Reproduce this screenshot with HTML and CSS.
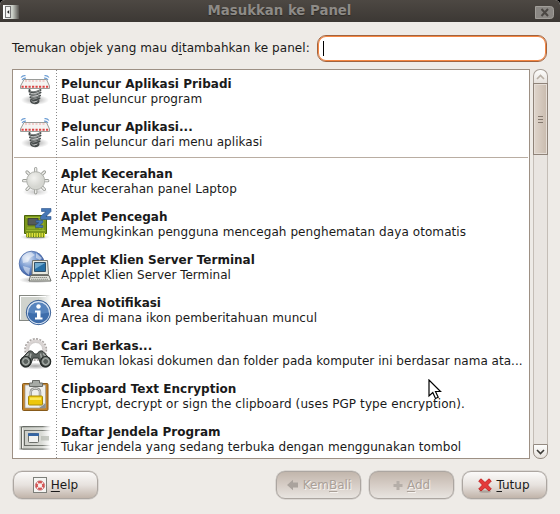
FILE: index.html
```html
<!DOCTYPE html>
<html lang="id">
<head>
<meta charset="utf-8">
<title>Masukkan ke Panel</title>
<link rel="stylesheet" href="styles.css">
</head>
<body>
<div class="window">
  <header class="titlebar">
    <svg class="app-icon" width="16" height="16" viewBox="0 0 16 16">
      <defs><linearGradient id="ai" x1="0" x2="1"><stop offset="0" stop-color="#fff"/><stop offset=".6" stop-color="#c8ccc4"/><stop offset="1" stop-color="#55524e"/></linearGradient></defs>
      <rect x="0" y="1" width="16" height="14" fill="url(#ai)"/>
      <rect x="2.500" y="2.500" width="5" height="11" fill="#f4f4f2" stroke="#777"/>
      <path d="M6.200 6v4L4 8z" fill="#222"/>
    </svg>
    <h1>Masukkan ke Panel</h1>
    <span class="close"><svg width="19" height="13" viewBox="0 0 19 13"><path d="M.5 .5H15.500Q18.500 .5 18.500 3.500V9.500Q18.500 12.500 15.500 12.500H.5Z" fill="#8a8783" stroke="#a19e99"/><path d="M6.500 3l6.500 7M13 3l-6.500 7" stroke="#4b4743" stroke-width="2"/></svg></span>
  </header>
  <div class="search">
    <label>Temukan objek yang mau d<u>i</u>tambahkan ke panel:</label>
    <div class="entry"><i class="caret"></i></div>
  </div>
  <div class="body">
    <div class="list">
      <div class="row"><svg class="icon" viewBox="0 0 36 34">
        <defs>
          <radialGradient id="sh"><stop offset="0" stop-color="#000" stop-opacity=".35"/><stop offset="1" stop-color="#000" stop-opacity="0"/></radialGradient>
          <g id="spring">
            <ellipse cx="17" cy="26" rx="14" ry="5" fill="url(#sh)"/>
            <path d="M3 3.500Q5 1 7.500 1.700M4 6Q5.500 3.700 8 4.200M31 3.500Q29 1 26.500 1.700M30 6Q28.500 3.700 26 4.200" fill="none" stroke="#6f9fd4" stroke-width="1.200"/>
            <path d="M11.500 16V17.500Q17 19.500 22.500 16M12 20.300Q17 22 22.500 18.500M12.500 23.300Q17 25 22 21.500M13 26Q17 27.500 21.500 24.200M13 26Q12.500 29 17 29.200Q20.500 29 20.500 27" fill="none" stroke="#454a4a" stroke-width="2" stroke-linecap="round"/>
            <path d="M12 17.300Q17 19 22 16.300M12.500 20.200Q17 21.800 22 18.800M13 23.200Q17 24.700 21.500 21.800M13.500 26.200Q14 28.700 17 28.800" fill="none" stroke="#a3a8a6" stroke-width=".7"/>
            <path d="M6 5.500H28.500L31.500 12V14.500H2.500V12Z" fill="#f5f4f2" stroke="#8f918d" stroke-width=".9"/>
            <path d="M7 7H27.500" stroke="#eda6a3" stroke-width="1" stroke-dasharray="2 1.500"/>
            <path d="M3.500 12.700H31" stroke="#dc4545" stroke-width="2" stroke-dasharray="2.200 1.300"/>
          </g>
        </defs>
        <use href="#spring"/></svg>
        <div class="text"><b class="ls4">Peluncur Aplikasi Pribadi</b><span class="ls9">Buat peluncur program</span></div></div>
      <div class="row"><svg class="icon" viewBox="0 0 36 34"><use href="#spring"/></svg>
        <div class="text"><b class="ls4">Peluncur Aplikasi...</b><span class="ls4">Salin peluncur dari menu aplikasi</span></div></div>
      <div class="sep"></div>
      <div class="row"><svg class="icon" viewBox="0 0 36 34">
        <defs><radialGradient id="sun" cx=".4" cy=".35"><stop offset="0" stop-color="#f2f2ef"/><stop offset="1" stop-color="#d5d6d1"/></radialGradient></defs>
        <ellipse cx="17.700" cy="28" rx="13" ry="4" fill="url(#sh)" opacity=".6"/>
        <g stroke="#9a9c97" stroke-width="3.200" stroke-linecap="round"><path d="M17.700 4.600V28.800M5.600 16.700H29.800M9 8L26.400 25.400M26.400 8L9 25.400"/></g>
        <path d="M17.700 4.600V28.800M5.600 16.700H29.800M9 8L26.400 25.400M26.400 8L9 25.400" stroke="#eeeeeb" stroke-width="1.500" stroke-linecap="round"/>
        <circle cx="17.700" cy="16.700" r="9" fill="url(#sun)" stroke="#b0b2ad"/></svg>
        <div class="text"><b>Aplet Kecerahan</b><span class="ls7">Atur kecerahan panel Laptop</span></div></div>
      <div class="row"><svg class="icon" viewBox="0 0 36 34">
        <ellipse cx="17" cy="30" rx="15" ry="3" fill="url(#sh)"/>
        <path d="M6.500 8.500H28.500V26.500H26.500V30H8.500V26.500H6.500Z" fill="#7b961b" stroke="#4a640b"/>
        <path d="M8 10.500H27M8 23.500H27M9 21H17M22 22V12M25 24V12" stroke="#a7c43a" stroke-width=".8"/>
        <path d="M8.500 28H27" stroke="#dde03b" stroke-width="4" stroke-dasharray="1.500 1"/>
        <path d="M10 11.500H20V18H10Z" fill="#555b5a" stroke="#363b38" stroke-width=".8"/>
        <path d="M23.500 1.500H33V4.500L28 9.500H33V12.500H22.500V9.500L28 4.500H23.500ZM18 13.500H25V15.500L21.500 18.500H25V20.500H17.500V18.500L21 15.500H18Z" fill="#4677b5" stroke="#2c5289" stroke-width=".6"/></svg>
        <div class="text"><b class="ls4">Aplet Pencegah</b><span class="ls8">Memungkinkan pengguna mencegah penghematan daya otomatis</span></div></div>
      <div class="row"><svg class="icon" viewBox="0 0 36 34">
        <defs><radialGradient id="gl" cx=".35" cy=".3" r=".8"><stop offset="0" stop-color="#dce6f5"/><stop offset=".5" stop-color="#6c90cb"/><stop offset="1" stop-color="#27468e"/></radialGradient></defs>
        <ellipse cx="18" cy="30" rx="17" ry="3.500" fill="url(#sh)"/>
        <circle cx="13.700" cy="13.700" r="12.500" fill="url(#gl)" stroke="#4060a0" stroke-width=".7"/>
        <path d="M4 7Q8 2 13 2L17 5L12 8L10 12L5 13ZM5 16L12 18L11 25Q6 22 5 16ZM18 3L24 8L22 10L18 8Z" fill="#fff" opacity=".5"/>
        <path d="M14.500 10.500H29.500L30.500 24.500H14Z" fill="#e7e8df" stroke="#74766f"/>
        <path d="M16.500 12.500H27.500V21.500H16.500Z" fill="#276fa5" stroke="#315169"/><path d="M17 13H27L17 19Z" fill="#72acd0"/>
        <path d="M12.500 25.500H31L33 31H11Z" fill="#e2e3dc" stroke="#686a65"/>
        <path d="M13.500 27.500H29M13 29.300H30" stroke="#8e918a" stroke-dasharray="1.500 .5"/></svg>
        <div class="text"><b>Applet Klien Server Terminal</b><span>Applet Klien Server Terminal</span></div></div>
      <div class="row"><svg class="icon" viewBox="0 0 36 34">
        <defs><linearGradient id="fd" x1="0" x2="1"><stop offset="0" stop-color="#d0d3cd"/><stop offset=".6" stop-color="#d0d3cd"/><stop offset="1" stop-color="#d0d3cd" stop-opacity="0"/></linearGradient>
        <linearGradient id="fe" gradientUnits="userSpaceOnUse" x1="1" x2="33" y1="0" y2="0"><stop offset="0" stop-color="#858882"/><stop offset=".5" stop-color="#858882"/><stop offset="1" stop-color="#858882" stop-opacity="0"/></linearGradient></defs>
        <rect x="1.500" y="2.500" width="32" height="25" fill="url(#fd)" stroke="url(#fe)"/><path d="M2.500 26.500V3.500H28" fill="none" stroke="#fff"/>
        <circle cx="20.500" cy="19.500" r="12.200" fill="#3465a4" stroke="#2b528b" stroke-width=".7"/>
        <circle cx="20.500" cy="19.500" r="10.900" fill="#5784bd" stroke="#dce6f2" stroke-width="1.200"/>
        <path d="M9.800 19.500A10.700 10.700 0 0 0 31.200 19.500Q20 22 9.800 19.500" fill="#3e6dab"/>
        <circle cx="20.500" cy="13.500" r="2.200" fill="#fff"/><path d="M17 17.500H22.500V24.500H24.500V26.500H17V24.500H19V19.500H17Z" fill="#fff"/></svg>
        <div class="text"><b>Area Notifikasi</b><span class="ls8">Area di mana ikon pemberitahuan muncul</span></div></div>
      <div class="row"><svg class="icon" viewBox="0 0 36 34">
        <ellipse cx="17.500" cy="30" rx="16" ry="3.500" fill="url(#sh)"/>
        <circle cx="17.700" cy="13.500" r="10.500" fill="none" stroke="#aaa5a3" stroke-width="2" stroke-dasharray="2 1.300"/>
        <circle cx="17.700" cy="13.500" r="8.500" fill="none" stroke="#d9d4d3" stroke-width="3"/><circle cx="17.700" cy="13.500" r="7" fill="#fff" stroke="#b5b0ae" stroke-width=".6"/>
        <path d="M9 17Q12 13 15.500 16.500L16.500 18H19L20 16.500Q23.500 13 26.500 17L32.500 24Q33 29.500 29 31Q23 32 22 26L20.500 22H15L13.500 26Q12 32 6 31Q2 29 2.500 24Z" fill="#5e6461" stroke="#2f3432"/>
        <path d="M10.500 17.500L7 21.500M25 17.500L28.500 21.500M13 17.500L12 22M22.500 17.500L23.500 22" stroke="#a5aaa6" stroke-width="1.400"/>
        <g fill="#7e8581" stroke="#252a28" stroke-width="1.200"><circle cx="7.800" cy="25.500" r="5"/><circle cx="27.700" cy="25.500" r="5"/></g>
        <g fill="#59605c" stroke="#c3c8c4" stroke-width=".8"><circle cx="7.800" cy="25.500" r="3"/><circle cx="27.700" cy="25.500" r="3"/></g></svg>
        <div class="text"><b>Cari Berkas...</b><span class="ls3">Temukan lokasi dokumen dan folder pada komputer ini berdasar nama ata...</span></div></div>
      <div class="row"><svg class="icon" viewBox="0 0 36 34">
        <rect x="4.500" y="4.500" width="25.500" height="27" rx="1" fill="#c28229" stroke="#875a1a"/>
        <path d="M7 6H27.500V29H7Z" fill="#f0f0ed" stroke="#9b9c98" stroke-width=".7"/><path d="M27.500 24V29H21Z" fill="#8c9090"/><path d="M21 29L22 24H27.500Z" fill="#cfd1cd"/>
        <path d="M14.500 1.500H21.500V4H24.500V7.500H11.500V4H14.500Z" fill="#a6aaa5" stroke="#686b67"/>
        <path d="M12.800 17.500V13Q13 9.500 17.500 9.500Q22 9.500 22 13V17.500" fill="none" stroke="#898b88" stroke-width="2.400"/><path d="M12.800 17V13Q13 9.500 17.500 9.500Q22 9.500 22 13V17" fill="none" stroke="#dededb"/>
        <rect x="10.500" y="17" width="14" height="9" rx="1" fill="#edc70b" stroke="#a98b09"/><path d="M12 18.500H23V21H12Z" fill="#fbe75b"/></svg>
        <div class="text"><b class="ls4">Clipboard Text Encryption</b><span class="ls9">Encrypt, decrypt or sign the clipboard (uses PGP type encryption).</span></div></div>
      <div class="row"><svg class="icon" viewBox="0 0 36 34">
        <defs><linearGradient id="wf" gradientUnits="userSpaceOnUse" x1="0" x2="33" y1="0" y2="0"><stop offset="0" stop-color="#666a64" stop-opacity="0"/><stop offset=".16" stop-color="#666a64"/><stop offset=".75" stop-color="#7b7f79"/><stop offset="1" stop-color="#999" stop-opacity="0"/></linearGradient>
        <linearGradient id="wb" x1="0" x2="1"><stop offset="0" stop-color="#c9ccc5"/><stop offset=".7" stop-color="#d9dbd6"/><stop offset="1" stop-color="#fff"/></linearGradient></defs>
        <rect x="1.500" y="5" width="31" height="22" fill="url(#wb)"/>
        <path fill="url(#wf)" d="M1 4H33V5.200H1ZM1 26.500H33V27.700H1ZM6 8H33V9H6ZM6 23H33V24H6Z"/>
        <path d="M3.500 5V27M6.500 8V24" stroke="#666a64"/><path d="M4.500 6V26" stroke="#f2f2ef"/>
        <rect x="23" y="14" width="8" height="4.500" fill="#b5b9b1" opacity=".7"/>
        <rect x="10.500" y="11.500" width="10" height="9" rx="1" fill="#f1f2f0" stroke="#6c706b"/><path d="M10 11.200H21V14H10Z" fill="#3465a4"/></svg>
        <div class="text"><b>Daftar Jendela Program</b><span class="ls7">Tukar jendela yang sedang terbuka dengan menggunakan tombol</span></div></div>
      <i class="guide"></i>
    </div>
    <div class="scrollbar">
      <div class="step up"><svg width="9" height="6" viewBox="0 0 9 6"><path d="M1 5L4.500 1.500L8 5" fill="none" stroke="#b9b0a6" stroke-width="1.600"/></svg></div>
      <div class="thumb"><i></i><i></i><i></i></div>
      <div class="track"></div>
      <div class="step down"><svg width="9" height="6" viewBox="0 0 9 6"><path d="M1 1L4.500 4.500L8 1" fill="none" stroke="#3c3b37" stroke-width="1.600"/></svg></div>
    </div>
  </div>
  <footer class="actions">
    <div class="btn help"><svg width="14" height="16" viewBox="0 0 14 16"><rect x=".5" y=".5" width="13" height="15" fill="#f5f5f3" stroke="#7d7f7a"/><circle cx="7" cy="8.500" r="3.300" fill="none" stroke="#d65252" stroke-width="2.200"/><path d="M3 4.500L5.300 6.800M11 4.500L8.700 6.800M3 12.500L5.300 10.200M11 12.500L8.700 10.200" stroke="#fff" stroke-width="1.200"/><circle cx="7" cy="8.500" r="4.700" fill="none" stroke="#b34b4b" stroke-width=".6"/></svg><span><u>H</u>elp</span></div>
    <div class="btn off back"><svg width="13" height="12" viewBox="0 0 13 12"><path d="M1 6L7 .8V3.500H12V8.500H7V11.200Z" fill="#aaa39d"/></svg><span>Kem<u>B</u>ali</span></div>
    <div class="btn off add"><svg width="10" height="11" viewBox="0 0 10 11"><path d="M3.500 1H6.500V4H9.500V7H6.500V10H3.500V7H.5V4H3.500Z" fill="#b5aea8"/></svg><span><u>A</u>dd</span></div>
    <div class="btn quit"><svg width="14" height="15" viewBox="0 0 14 15"><ellipse cx="7" cy="13.500" rx="6" ry="1.300" fill="#9b918a" opacity=".7"/><path d="M3 .8L7 4.500L11 .8L13.300 3L9.600 7L13.300 11L11 13L7 9.500L3 13L.7 11L4.400 7L.7 3Z" fill="#e43a3a" stroke="#bd1717" stroke-width=".8"/></svg><span><u>T</u>utup</span></div>
  </footer>
</div>
<svg class="pointer" width="14" height="21" viewBox="0 0 14 21"><path d="M1 1V17L4.800 13.500L7.500 19.500L10.200 18.300L7.500 12.500H12.500Z" fill="#fff" stroke="#000" stroke-width="1.200"/></svg>
</body>
</html>
```
FILE: styles.css
```css
* { box-sizing: border-box; }
body {
  margin: 0;
  width: 560px;
  height: 514px;
  overflow: hidden;
  background: #000;
  font: 12px/15px "DejaVu Sans", sans-serif;
  color: #1a1a1a;
}
svg { display: block; flex: none; }
u { text-decoration: underline; text-underline-offset: 2px; text-decoration-thickness: 1px; text-decoration-skip-ink: none; }
.window { height: 514px; background: #eeebe7; border-radius: 5px 5px 0 0; overflow: hidden; }
.titlebar {
  display: grid;
  grid-template-columns: 26px 1fr 30px;
  align-items: center;
  height: 22px;
  padding: 0 0 0 3px;
  background: linear-gradient(#4d4843, #3c3834);
}
.titlebar h1 { margin: 0; font-size: 13.3px; line-height: 20px; text-align: center; color: #8e8b87; text-shadow: 0 1px 1px #2b2825; }
.app-icon { margin-top: 2px; }
.close { padding: 2px 0 0 5px; }
.search { display: flex; align-items: center; height: 47px; padding: 5px 13px 0 12px; }
.search label { flex: none; width: 305px; padding-top: 1px; letter-spacing: .045px; white-space: nowrap; }
.entry {
  flex: 1;
  height: 27px;
  padding: 5px;
  border: 1px solid #a0633f;
  border-radius: 9px;
  background: #fff;
  box-shadow: inset 0 0 0 1px #f58642;
}
.caret { display: block; width: 1px; height: 15px; background: #000; }
.body { display: flex; gap: 3px; height: 390px; padding-left: 12px; }
.list { position: relative; width: 518px; border: 1px solid #9d9084; background: #fff; overflow: hidden; }
.row { display: flex; height: 43px; padding: 4px 0 0 5px; }
.icon { width: 36px; height: 34px; }
.text { display: flex; flex-direction: column; padding: 3px 0 0 7px; white-space: nowrap; }
.ls3 { letter-spacing: .03px; }
.ls4 { letter-spacing: .04px; }
.ls7 { letter-spacing: .07px; }
.ls8 { letter-spacing: .08px; }
.ls9 { letter-spacing: .09px; }
.sep { height: 4px; margin: 0 1px; border-top: 1px solid transparent; background: linear-gradient(#b9ada2 1px, transparent 1px); }
.guide { position: absolute; left: 43px; top: 0; width: 1px; height: 100%; background: repeating-linear-gradient(#888 0 1px, #fff 1px 3px); }
.scrollbar { display: flex; flex-direction: column; width: 15px; }
.step { display: flex; align-items: center; justify-content: center; height: 15px; border: 1px solid #a79e96; background: linear-gradient(#fdfdfc, #e6e1dc); }
.up { height: 14px; border-radius: 7px 7px 0 0; border-bottom: 0; }
.down { height: 15px; border-radius: 0 0 7px 7px; border-color: #948a81; }
.thumb {
  display: flex;
  flex-direction: column;
  align-items: center;
  justify-content: center;
  gap: 2px;
  height: 72px;
  border: 1px solid #8f8379;
  background: linear-gradient(90deg, #dfd5cc, #c9bbae);
  box-shadow: inset 0 0 0 1px #e5ddd6;
}
.thumb i { width: 5px; height: 1px; background: #84786e; }
.track { flex: 1; background: #e9e5e1; border: solid #c4bdb6; border-width: 0 1px; }
.actions { display: flex; gap: 8px; padding: 12px 13px 0; }
.btn {
  display: flex;
  align-items: center;
  justify-content: center;
  gap: 4px;
  width: 85px;
  height: 28px;
  border: 1px solid #aca6a1;
  border-radius: 9px;
  background: linear-gradient(#fbfaf9, #e7e2de 50%, #c1b4aa);
  box-shadow: 0 0 0 .5px #c8c4c0;
}
.help { margin-right: auto; }
.quit { padding-right: 1px; }
.off { color: #aaa098; text-shadow: 1px 1px 0 #f7f4f1; background: linear-gradient(#c2b6ac, #d6cdc6 50%, #e8e4e0); }
.pointer { position: absolute; left: 428px; top: 379px; }
```
